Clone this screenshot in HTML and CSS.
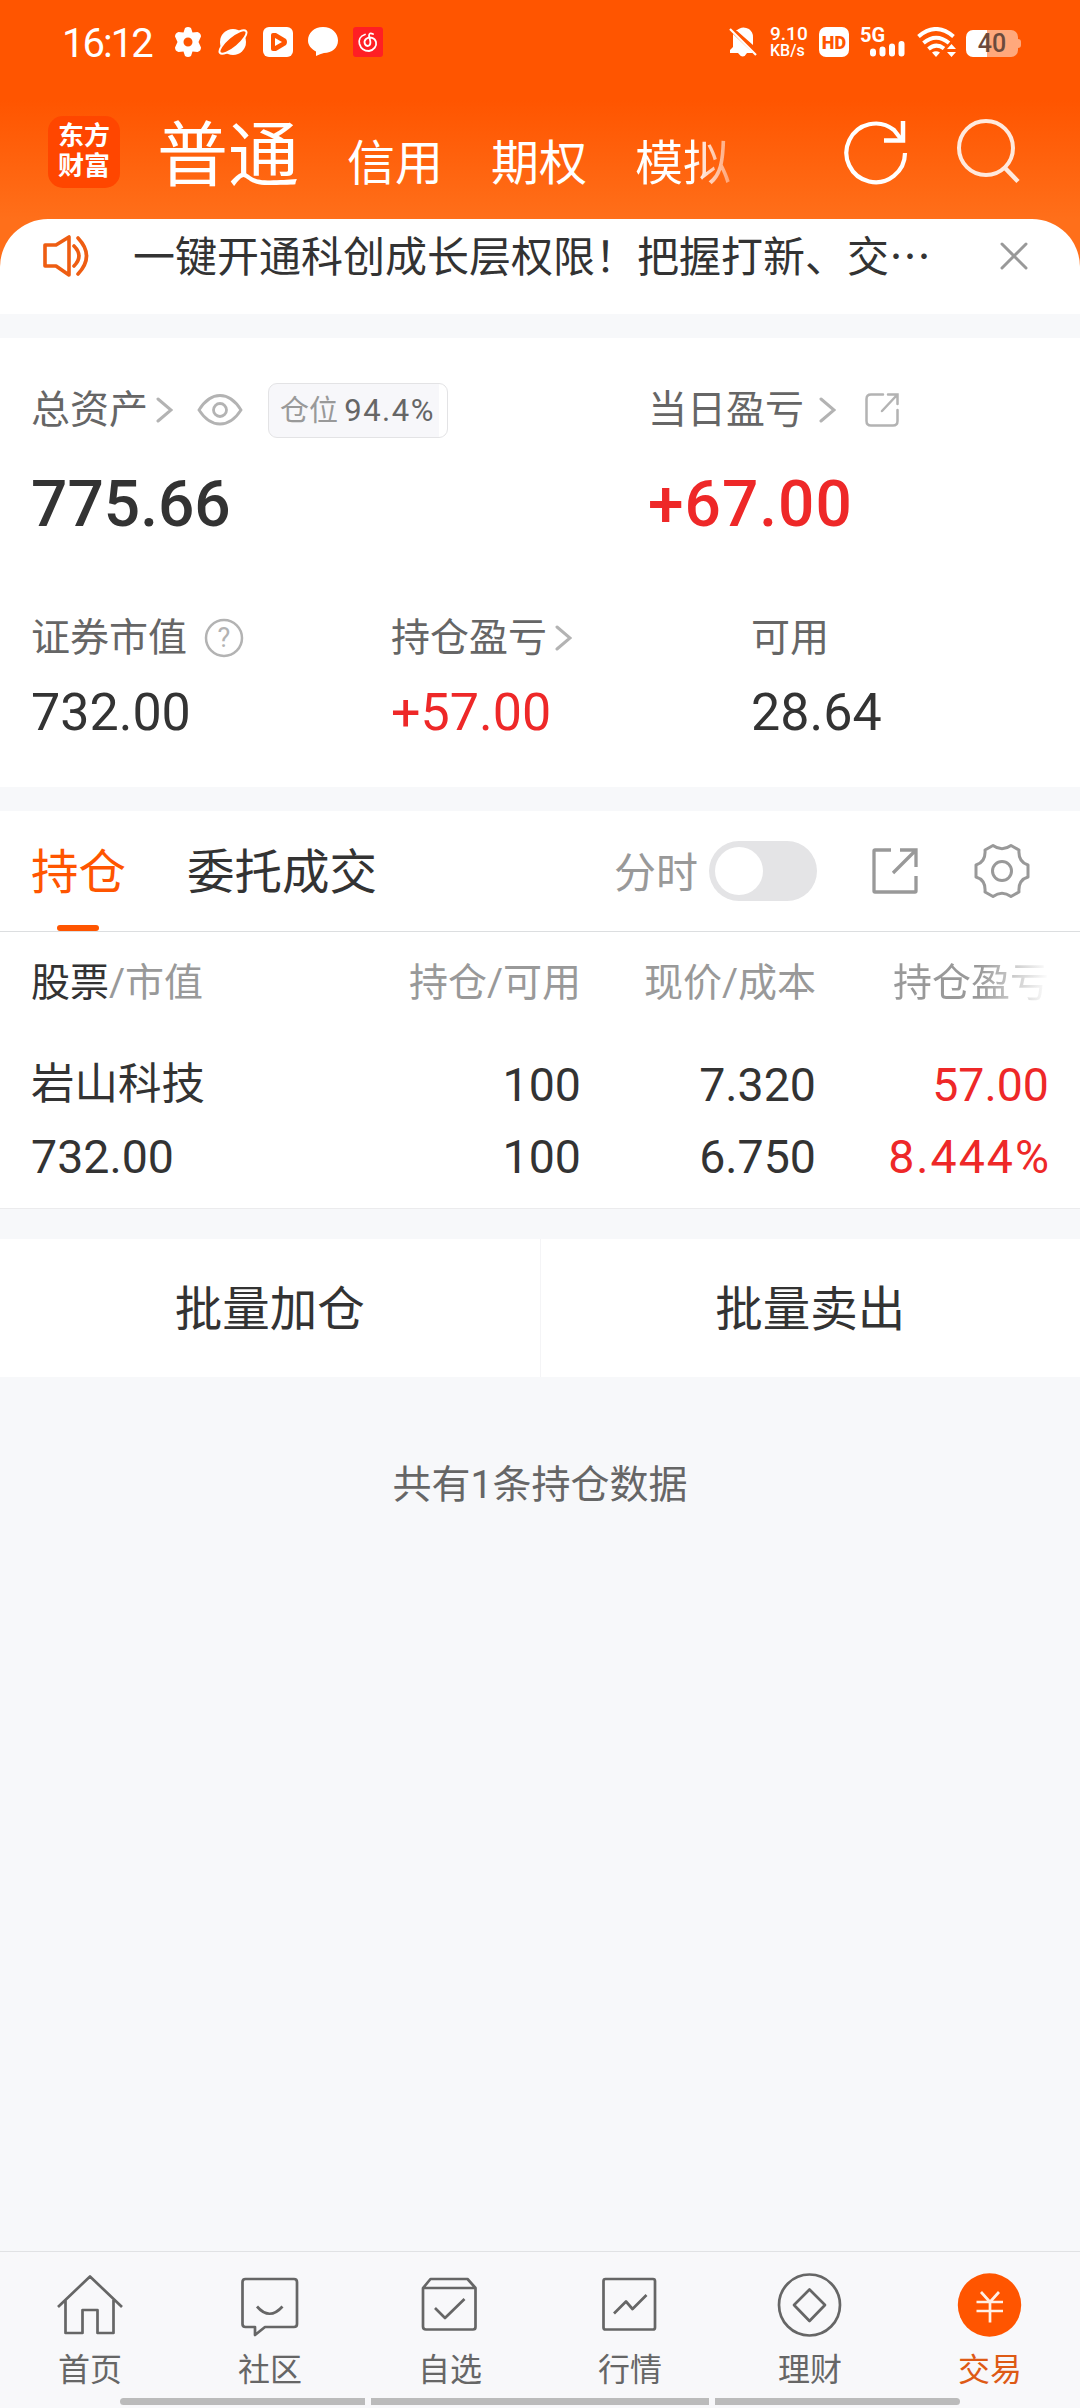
FILE: index.html
```html
<!DOCTYPE html>
<html lang="zh-CN">
<head>
    <meta charset="UTF-8">
    <meta name="viewport" content="width=device-width, initial-scale=1.0">
    <title>交易</title>
    <link rel="stylesheet" href="styles.css">
</head>
<body>
    <header class="header">
        <div class="status-bar">
            <span class="time">16:12</span>
            <div class="status-left">
                <svg width="30" height="30" viewBox="0 0 30 30"><path fill="#fff" fill-rule="evenodd" d="M12 1Q15-1 18 1L19.500 5.500 24.500 5Q28 6 28 9.500L25.500 15 28 20.500Q28 24 24.500 25L19.500 24.500 18 29Q15 31 12 29L10.500 24.500 5.500 25Q2 24 2 20.500L4.500 15 2 9.500Q2 6 5.500 5L10.500 5.500ZM15 10.500A4.500 4.500 0 1 0 15 19.500A4.500 4.500 0 1 0 15 10.500Z"/></svg>
                <svg width="30" height="30" viewBox="0 0 30 30"><circle cx="15" cy="15" r="13" fill="#fff"/><ellipse cx="15" cy="15" rx="17" ry="5.500" transform="rotate(-40 15 15)" fill="#ff5500" stroke="#fff" stroke-width="2"/></svg>
                <svg width="30" height="30" viewBox="0 0 30 30"><rect width="30" height="30" rx="6" fill="#fff"/><path d="M8 8Q8 6 10 6H13L23 12Q25 15 23 18L13 24H10Q8 24 8 22Z" fill="#ff5500"/><path d="M12 11L19 15 12 19Z" fill="#fff"/></svg>
                <svg width="30" height="30" viewBox="0 0 30 30"><path fill="#fff" d="M15 0C24 0 30 6 30 13.500S24 26 16 26Q12 27 8 29L8 24.500C3 22 0 18 0 13.500C0 6 6 0 15 0Z"/></svg>
                <svg width="30" height="30" viewBox="0 0 30 30"><rect width="30" height="30" rx="3" fill="#ff1f24"/><path d="M12 7.500C7 9 5.500 13 6.500 17C8 22 12 24 16 24C21 23 24 19 23 15C22 11 17 9 13 12C10 15 12 19 15 19C19 18 17 13 16 9Q16 5 20 7" fill="none" stroke="#fff" stroke-width="1.800" stroke-linecap="round"/></svg>
            </div>
            <div class="status-right">
                <svg class="bell" width="28" height="30" viewBox="0 0 28 30"><path fill="#fff" d="M7 4Q13-2 20 2Q24 5 24 10V18L7 3ZM4 7L24 26H18Q14 33 9 26H1V23L4 20Z"/><path d="M1 2L27 28" stroke="#fff" stroke-width="2.200"/></svg>
                <div class="speed"><span>9.10</span><span class="unit">KB/s</span></div>
                <div class="hd">HD</div>
                <div class="signal">
                    <span class="net">5G</span>
                    <svg width="36" height="17" viewBox="0 0 36 17"><path fill="none" stroke="#fff" stroke-width="6" stroke-linecap="round" d="M4 11.500V13.500M13.500 9.500V13.500M23 6.500V13.500M32.500 4V13.500"/></svg>
                </div>
                <svg class="wifi" width="41" height="30" viewBox="0 0 41 30"><path fill="none" stroke="#fff" stroke-width="4" d="M1.500 9.500Q19-5.500 36.500 9.500M6.500 16Q19 5.500 32 16M11.500 22Q19 15.500 27 21.500"/><path fill="#fff" d="M15 25.500Q19 23 23 25.500L19 30ZM30 22L34.500 17 39 22ZM30 25L34.500 30 39 25Z"/></svg>
                <div class="battery">40</div>
            </div>
        </div>
        <div class="nav-top">
            <div class="logo">东方<br>财富</div>
            <nav class="accounts">
                <span class="current">普通</span>
                <span>信用</span>
                <span>期权</span>
                <span class="fading">模拟</span>
            </nav>
            <svg class="refresh" width="64" height="68" viewBox="0 0 64 68"><path d="M61 36A29.300 29.300 0 1 1 50 13L57 22" fill="none" stroke="#fff" stroke-width="4.200"/><path d="M59 4V23.500H40" fill="none" stroke="#fff" stroke-width="4.500"/></svg>
            <svg class="search" width="66" height="68" viewBox="0 0 66 68"><circle cx="30" cy="31" r="27" fill="none" stroke="#ffe9dd" stroke-width="4"/><path d="M49 51L62 64.500" stroke="#ffe9dd" stroke-width="4.500"/></svg>
        </div>
        <div class="notice">
            <svg class="speaker" width="48" height="44" viewBox="0 0 48 44"><g fill="none" stroke="#ee5d12" stroke-width="3.600" stroke-linejoin="round" stroke-linecap="round"><path d="M3 11H14L27 3V41L14 32H3Z"/><path d="M32 12Q42 22 32 32M36 4Q53 22 36 40"/></g></svg>
            <span class="notice-text">一键开通科创成长层权限！把握打新、交…</span>
            <svg class="close" width="28" height="28" viewBox="0 0 28 28"><path d="M2 2L26 26M26 2L2 26" stroke="#999" stroke-width="3" stroke-linecap="round"/></svg>
        </div>
    </header>

    <section class="summary">
        <div class="totals">
            <div class="total">
                <div class="label">
                    总资产
                    <svg class="chevron near" width="17" height="26" viewBox="0 0 17 26"><path d="M2 2L15 13 2 24"/></svg>
                    <svg class="eye" width="46" height="34" viewBox="0 0 46 34"><g fill="none" stroke="#b3b3b3" stroke-width="2.800"><path d="M2 17Q11 2.500 23 2.500T44 17Q35 31 23 31T2 17Z"/><circle cx="23" cy="17" r="6.500"/></g></svg>
                    <span class="position">仓位 <b>94.4%</b></span>
                </div>
                <div class="amount big">775.66</div>
            </div>
            <div class="total">
                <div class="label">
                    当日盈亏
                    <svg class="chevron far" width="17" height="26" viewBox="0 0 17 26"><path d="M2 2L15 13 2 24"/></svg>
                    <svg class="share-small" width="36" height="36" viewBox="0 0 36 36"><path d="M19 2.500H7Q2.500 2.500 2.500 7V29Q2.500 33.500 7 33.500H29Q33.500 33.500 33.500 29V18M24 2.500H33.500V12M33 3L18 19" fill="none" stroke="#b3b3b3" stroke-width="2.500" stroke-linecap="round"/></svg>
                </div>
                <div class="amount big red">+67.00</div>
            </div>
        </div>
        <div class="details">
            <div>
                <div class="label">证券市值
                    <svg class="help" width="40" height="40" viewBox="0 0 40 40"><circle cx="20" cy="20" r="18" fill="none" stroke="#b3b3b3" stroke-width="2.500"/><text x="20" y="29" text-anchor="middle">?</text></svg>
                </div>
                <div class="amount">732.00</div>
            </div>
            <div>
                <div class="label">持仓盈亏
                    <svg class="chevron near" width="17" height="26" viewBox="0 0 17 26"><path d="M2 2L15 13 2 24"/></svg>
                </div>
                <div class="amount red">+57.00</div>
            </div>
            <div>
                <div class="label">可用</div>
                <div class="amount">28.64</div>
            </div>
        </div>
    </section>

    <section class="holdings">
        <div class="tabs">
            <span class="tab active">持仓</span>
            <span class="tab">委托成交</span>
            <span class="minute">分时</span>
            <span class="switch"></span>
            <svg class="share" width="48" height="48" viewBox="0 0 48 48"><path d="M20 3H4Q3 3 3 4V44Q3 45 4 45H44Q45 45 45 44V29M29 3H45V20M44 4L22 26" fill="none" stroke="#999" stroke-width="3.300"/></svg>
            <svg class="settings" width="56" height="56" viewBox="0 0 56 56"><g fill="none" stroke="#999" stroke-width="3" stroke-linejoin="round"><path d="M11 7L19 2.500Q28 9 37 2.500L45 7Q44 19 54 22V34Q44 37 45 49L37 53.500Q28 47 19 53.500L11 49Q12 37 2 34V22Q12 19 11 7Z"/><circle cx="28" cy="28" r="9.500"/></g></svg>
        </div>
        <div class="row table-head">
            <span><em>股票</em>/市值</span>
            <span>持仓/可用</span>
            <span>现价/成本</span>
            <span class="cut">持仓盈亏</span>
        </div>
        <div class="row first">
            <span class="name">岩山科技</span>
            <span>100</span>
            <span>7.320</span>
            <span class="red">57.00</span>
        </div>
        <div class="row second">
            <span>732.00</span>
            <span>100</span>
            <span>6.750</span>
            <span class="red rate">8.444%</span>
        </div>
    </section>

    <section class="batch">
        <div class="batch-btn">批量加仓</div>
        <div class="batch-btn">批量卖出</div>
    </section>
    <p class="count">共有1条持仓数据</p>

    <nav class="tabbar">
        <a class="item">
            <svg width="72" height="72" viewBox="0 0 72 72"><path d="M4 39L36 8.500 68 39M11.500 32V65H28.500V42H43.500V65H59.500V32"/></svg>
            首页
        </a>
        <a class="item">
            <svg width="72" height="72" viewBox="0 0 72 72"><path d="M11.500 11H60Q63 11 63 14V56Q63 59 60 59H31L21 67V59H11.500Q8.500 59 8.500 56V14Q8.500 11 11.500 11ZM23 38.500Q35.500 53 48.500 38.500"/></svg>
            社区
        </a>
        <a class="item">
            <svg width="72" height="72" viewBox="0 0 72 72"><path d="M9 20L16.500 11H53.500L61.500 20V59Q61.500 61.500 59 61.500H12Q9 61.500 9 58.500ZM9 20H61.500M21 40L31 50 50.500 31"/></svg>
            自选
        </a>
        <a class="item">
            <svg width="72" height="72" viewBox="0 0 72 72"><rect x="9.500" y="11" width="51.500" height="50.500" rx="2"/><path d="M20 45.500L32 33.500 38.500 41 52.500 27"/></svg>
            行情
        </a>
        <a class="item">
            <svg width="72" height="72" viewBox="0 0 72 72"><circle cx="35.500" cy="37" r="30.500"/><path d="M35.500 21.500L51 37 35.500 53 20 37Z"/></svg>
            理财
        </a>
        <a class="item on">
            <svg width="72" height="72" viewBox="0 0 72 72"><circle class="disc" cx="35.500" cy="37" r="31.700"/><path d="M27 24L36 34 45 24M22.500 34H49M22.500 43H49M36 34V54.500"/></svg>
            交易
        </a>
    </nav>
    <div class="gesture"><i></i><i class="mid"></i><i></i></div>
</body>
</html>
```
FILE: styles.css
```css
* { box-sizing: border-box; }
body {
    margin: 0;
    width: 1080px;
    height: 2408px;
    display: flex;
    flex-direction: column;
    background-color: #f7f8fa;
    color: #333;
    font-family: Roboto, "Noto Sans CJK SC", sans-serif;
    overflow: hidden;
}
svg { flex: none; display: block; }
.red { color: #ee2828; }

/* header */
.header {
    height: 314px;
    background: linear-gradient(#ff5500 100px, #ff6f1a 219px, #ff6f1a);
}
.status-bar {
    height: 84px;
    padding: 0 62px 0 62px;
    display: flex;
    align-items: center;
    color: #fff;
}
.time {
    width: 111px;
    font-size: 40px;
    letter-spacing: -2px;
    line-height: 84px;
    padding-top: 4px;
}
.status-left { display: flex; gap: 15px; }
.status-right {
    display: flex;
    align-items: center;
    margin-left: auto;
}
.bell { margin-right: 13px; }
.speed {
    width: 36px;
    margin-right: 13px;
    font-size: 19px;
    font-weight: 500;
    line-height: 17px;
    white-space: nowrap;
}
.speed span { display: block; }
.speed .unit { font-size: 16px; }
.hd {
    width: 30px;
    height: 30px;
    margin-right: 11px;
    border-radius: 7px;
    background-color: #fff;
    color: #ff5500;
    font-size: 18px;
    font-weight: 900;
    line-height: 31px;
    text-align: center;
}
.signal {
    width: 44px;
    height: 30px;
    margin-right: 13px;
}
.signal svg { margin: -2px 0 0 9px; }
.net {
    display: block;
    height: 15px;
    font-size: 20px;
    font-weight: 700;
    line-height: 17px;
}
.wifi { margin-right: 8px; }
.battery {
    position: relative;
    width: 52px;
    height: 27px;
    margin-top: 3px;
    border-radius: 7px;
    background: linear-gradient(90deg, #fff 21px, #ffa87c 21px);
    color: #6b4a3c;
    font-size: 25px;
    font-weight: 500;
    line-height: 28px;
    text-align: center;
}
.battery::after {
    content: "";
    position: absolute;
    left: 52px;
    top: 9px;
    width: 3px;
    height: 9px;
    border-radius: 0 3px 3px 0;
    background-color: #ffa87c;
}
.nav-top {
    height: 135px;
    padding: 0 58px 0 48px;
    display: flex;
    align-items: center;
}
.logo {
    width: 72px;
    height: 72px;
    border-radius: 15px;
    background-color: #ff4600;
    color: #fff;
    font-size: 26px;
    font-weight: 700;
    line-height: 30px;
    text-align: center;
    padding-top: 5px;
}
.accounts {
    display: flex;
    align-items: baseline;
    margin-left: 37px;
    padding-top: 14px;
    color: #fff;
    font-size: 48px;
    line-height: 104px;
}
.accounts span {
    margin-right: 48px;
    padding-top: 2px;
}
.accounts .current { font-size: 71px; }
.fading {
    background: linear-gradient(90deg, #fff 60%, #ffa070);
    -webkit-background-clip: text;
    background-clip: text;
    color: transparent;
}
.refresh { margin: 0 0 2px auto; }
.search { margin: 0 0 2px 48px; }
.notice {
    height: 95px;
    padding: 0 52px 22px 42px;
    display: flex;
    align-items: center;
    background-color: #fff;
    border-radius: 48px 48px 0 0;
}
.notice-text {
    margin: 0 0 3px 43px;
    font-family: "Noto Sans CJK SC", sans-serif;
    font-size: 42px;
    line-height: 60px;
}
.close { margin-left: auto; }

/* account summary */
.summary {
    height: 449px;
    margin-top: 24px;
    background-color: #fff;
    padding: 40px 0 0 31px;
}
.totals {
    display: grid;
    grid-template-columns: 617px 1fr;
    height: 228px;
}
.details {
    display: grid;
    grid-template-columns: 360px 360px 1fr;
}
.label {
    height: 64px;
    display: flex;
    align-items: center;
    color: #666;
    font-size: 39px;
    line-height: 64px;
    white-space: nowrap;
}
.chevron path {
    fill: none;
    stroke: #b3b3b3;
    stroke-width: 3;
    stroke-linecap: round;
}
.chevron.near { margin-left: 8px; }
.chevron.far { margin-left: 15px; }
.eye { margin-left: 24px; }
.share-small { margin-left: 28px; }
.help { margin-left: 17px; }
.help text { font-size: 27px; fill: #b3b3b3; }
.position {
    width: 180px;
    height: 55px;
    margin-left: 25px;
    padding-left: 11px;
    border: 1px solid #e3e3e5;
    border-radius: 9px;
    background: linear-gradient(90deg, #f7f7fa 170px, #fff 170px);
    color: #999;
    font-size: 29px;
    line-height: 54px;
}
.position b {
    margin-left: -1px;
    color: #666;
    font-size: 31px;
    font-weight: 400;
    letter-spacing: 1.500px;
}
.amount {
    margin-top: 11px;
    font-size: 52px;
    line-height: 64px;
}
.amount.big {
    margin-top: 31px;
    font-size: 64px;
    font-weight: 500;
}
.amount.big.red { letter-spacing: 1px; }

/* holdings */
.holdings {
    height: 398px;
    margin-top: 24px;
    background-color: #fff;
    border-bottom: 1px solid #ebebed;
}
.tabs {
    height: 121px;
    padding: 0 50px 0 31px;
    display: flex;
    align-items: center;
    border-bottom: 1px solid #dcdee0;
}
.tab {
    position: relative;
    height: 120px;
    margin-right: 61px;
    font-size: 47.500px;
    line-height: 125px;
}
.tab.active { color: #ff5500; }
.tab.active::after {
    content: "";
    position: absolute;
    left: 26px;
    bottom: 0;
    width: 42px;
    height: 6px;
    border-radius: 3px;
    background-color: #ff5500;
}
.minute {
    margin: 0 0 3px auto;
    color: #999;
    font-size: 42px;
}
.switch {
    width: 108px;
    height: 60px;
    margin-left: 11px;
    padding: 6px;
    border-radius: 30px;
    background-color: #e4e4e6;
}
.switch::before {
    content: "";
    display: block;
    width: 48px;
    height: 48px;
    border-radius: 50%;
    background-color: #fff;
}
.share { margin-left: 54px; }
.settings { margin-left: 55px; }
.row {
    display: grid;
    grid-template-columns: 300px 250px 235px 233px;
    padding-left: 31px;
    font-size: 46.500px;
    line-height: 72px;
    text-align: right;
}
.row span:first-child { text-align: left; }
.table-head {
    color: #999;
    font-size: 39px;
    line-height: 102px;
    height: 117px;
}
.table-head em { color: #333; font-style: normal; }
.cut {
    background: linear-gradient(90deg, #999 70%, #fff);
    -webkit-background-clip: text;
    background-clip: text;
    color: transparent;
}
.row .name { font-size: 43.500px; }
.rate {
    margin-right: -2px;
    letter-spacing: 2px;
}

/* batch buttons */
.batch {
    display: flex;
    height: 138px;
    margin-top: 30px;
    background-color: #fff;
}
.batch-btn {
    flex: 1;
    font-size: 47.500px;
    line-height: 143px;
    text-align: center;
}
.batch-btn + .batch-btn { border-left: 1px solid #f4f4f6; }
.count {
    margin: 78px 0 0;
    color: #666;
    font-size: 39px;
    line-height: 60px;
    text-align: center;
}

/* bottom bar */
.tabbar {
    display: grid;
    grid-template-columns: repeat(6, 1fr);
    height: 157px;
    margin-top: auto;
    background-color: #f8f8fa;
    border-top: 1px solid #e1e2e4;
}
.item {
    display: flex;
    flex-direction: column;
    align-items: center;
    padding-top: 16px;
    color: #666;
    font-size: 32px;
    line-height: 60px;
}
.item svg path, .item svg circle, .item svg rect {
    fill: none;
    stroke: #666;
    stroke-width: 2.700;
    stroke-linejoin: round;
}
.item.on { color: #de5a15; }
.item.on svg path { stroke: #fff0e6; }
.item.on svg .disc { fill: #ff5500; stroke: none; }
.gesture {
    position: absolute;
    left: 120px;
    top: 2398px;
    width: 840px;
    height: 7px;
    display: flex;
    gap: 6px;
    border-radius: 4px;
    overflow: hidden;
}
.gesture i { width: 245px; background-color: #bbb; }
.gesture .mid { width: 338px; }
```
